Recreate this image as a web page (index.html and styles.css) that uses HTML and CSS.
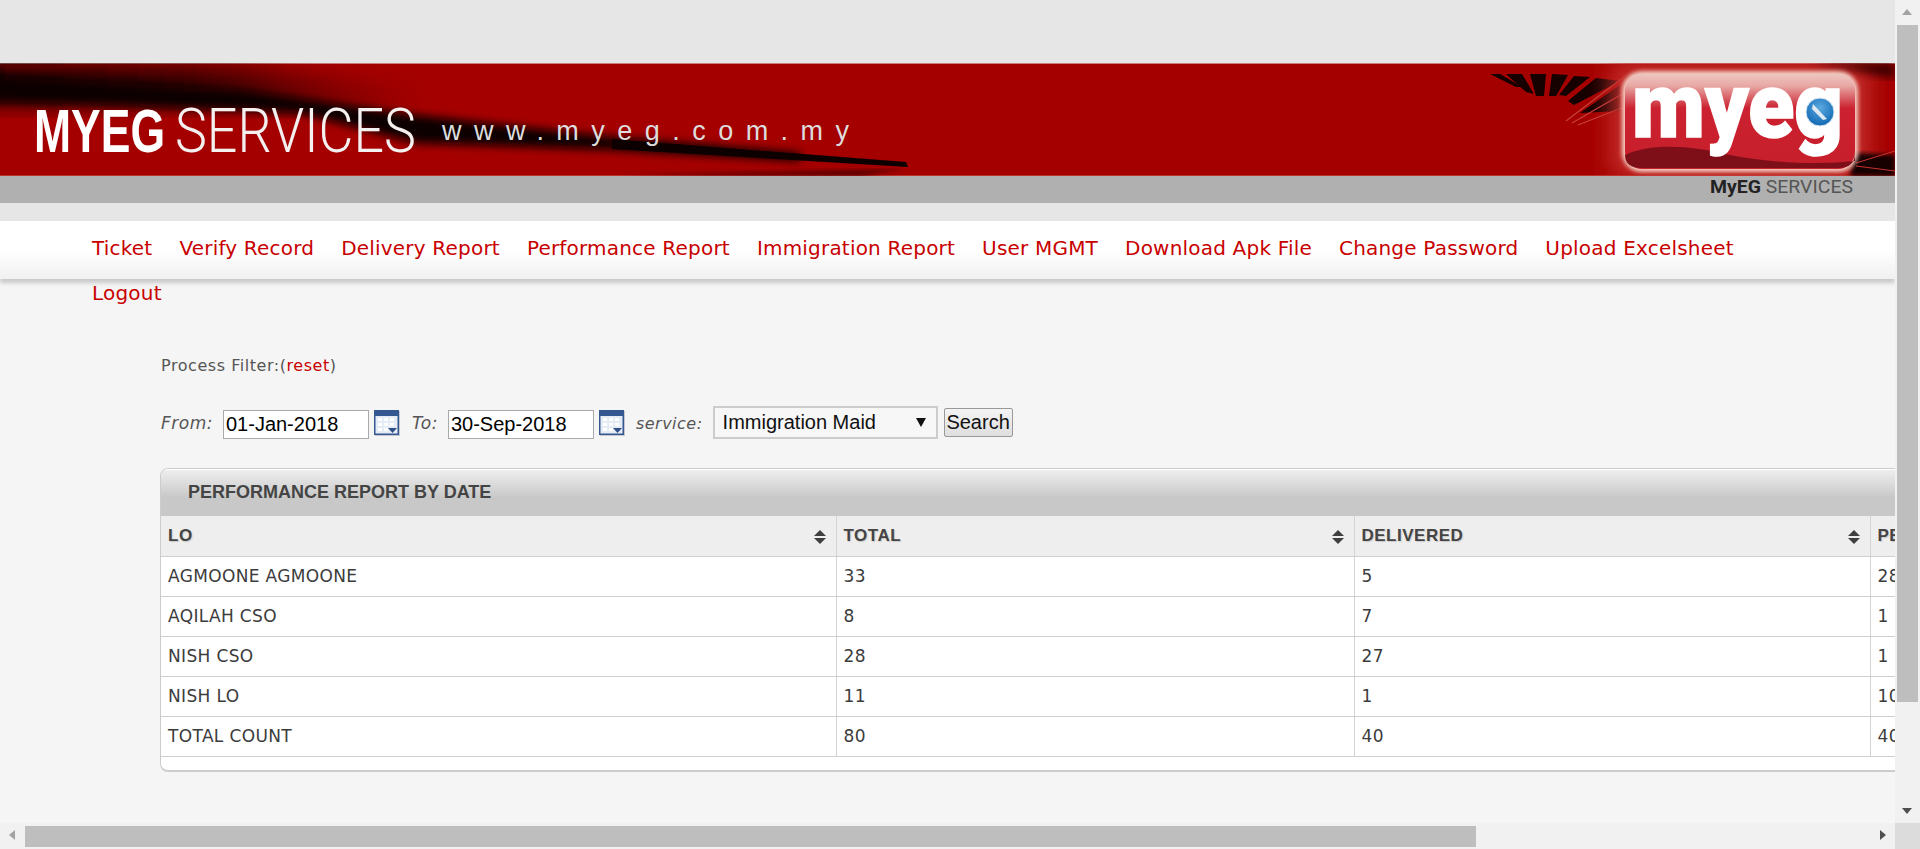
FILE: index.html
```html
<!DOCTYPE html>
<html lang="en">
<head>
    <meta charset="UTF-8">
    <meta name="viewport" content="width=device-width, initial-scale=1.0">
    <title>Performance Report</title>
    <link rel="stylesheet" href="styles.css">
</head>
<body>
<div class="window">
    <div class="page">
        <div class="head">
            <svg class="banner" viewBox="0 0 1895 140" width="1895" height="140">
                <defs>
                    <linearGradient id="badge" x1="0" x2="0" y1="0" y2="1">
                        <stop offset="0" stop-color="#eec5bf"/>
                        <stop offset="0.12" stop-color="#e8aaa6"/>
                        <stop offset="0.36" stop-color="#cb2130"/>
                        <stop offset="1" stop-color="#c81f2c"/>
                    </linearGradient>
                    <linearGradient id="fadeband" x1="0" x2="1" y1="0" y2="0">
                        <stop offset="0" stop-color="#000"/>
                        <stop offset="0.5" stop-color="#2a0000"/>
                        <stop offset="1" stop-color="#a40000"/>
                    </linearGradient>
                    <radialGradient id="globe" cx="0.5" cy="0.35" r="0.7">
                        <stop offset="0" stop-color="#5aa9e0"/>
                        <stop offset="1" stop-color="#0b62ae"/>
                    </radialGradient>
                    <filter id="blur12"><feGaussianBlur stdDeviation="12"/></filter>
                    <filter id="blur5"><feGaussianBlur stdDeviation="5"/></filter>
                    <filter id="blur4"><feGaussianBlur stdDeviation="4"/></filter>
                    <filter id="blur2"><feGaussianBlur stdDeviation="2"/></filter>
                    <filter id="blur1"><feGaussianBlur stdDeviation="0.7"/></filter>
                    <clipPath id="redclip"><rect width="1895" height="113"/></clipPath>
                </defs>

                <rect width="1895" height="140" fill="#b0b0b0"/>
                <rect width="1895" height="113" fill="#a40000"/>
                <rect width="1895" height="1" fill="#c9807d"/>
                <rect y="112" width="1895" height="1" fill="#b9322e"/>

                <g clip-path="url(#redclip)">
                    <!-- black swoosh on the left -->
                    <polygon points="-30,2 240,6 420,30 420,50 240,40 -30,38" fill="url(#fadeband)" filter="url(#blur12)"/>
                    <polygon points="-30,12 245,27 416,52 612,74 800,90 800,98 612,87 416,80 300,50 120,42 -30,38" fill="#080000" filter="url(#blur4)"/>
                    <polygon points="612,76 906,99 908,104 612,86" fill="#0a0000" filter="url(#blur1)"/>
                    <polygon points="620,112 905,106 860,113" fill="#5a0000" filter="url(#blur2)"/>

                    <!-- burst beside the badge -->
                    <g fill="#120000" filter="url(#blur1)">
                        <polygon points="1490,11 1500,11 1522,24 1516,24"/>
                        <polygon points="1506,11 1522,11 1534,31 1526,29"/>
                        <polygon points="1530,11 1546,11 1544,33 1536,33"/>
                        <polygon points="1552,11 1568,12 1556,33 1549,33"/>
                        <polygon points="1574,13 1590,14 1566,33 1559,32"/>
                        <polygon points="1596,15 1620,18 1574,42 1568,38"/>
                        <polygon points="1620,22 1620,48 1580,50"/>
                    </g>
                    <g stroke="#c8413c" stroke-width="1.2">
                        <line x1="1566" y1="58" x2="1624" y2="14"/>
                        <line x1="1572" y1="60" x2="1624" y2="30"/>
                        <line x1="1578" y1="62" x2="1624" y2="44"/>
                    </g>

                    <!-- glow, dark corner and streaks on the right -->
                    <rect x="1612" y="0" width="256" height="113" fill="#c8332f" filter="url(#blur12)"/>
                    <polygon points="1810,0 1895,0 1895,16 1850,6" fill="#3a0000" filter="url(#blur5)"/>
                    <polygon points="1855,90 1895,92 1895,113 1850,113" fill="#140000" filter="url(#blur2)"/>
                    <line x1="1856" y1="100" x2="1895" y2="88" stroke="#c8332f"/>
                    <line x1="1856" y1="103" x2="1895" y2="108" stroke="#c8332f"/>

                    <!-- badge -->
                    <rect x="1622" y="8" width="236" height="101" rx="20" fill="#f4d0c4" filter="url(#blur2)"/>
                    <rect x="1625" y="11" width="230" height="95" rx="17" fill="url(#badge)"/>
                    <path d="M1625 92 C1650 80 1690 82 1730 92 C1770 100 1820 102 1855 98 L1855 90 Q1855 105 1838 105 L1642 105 Q1625 105 1625 92 Z" fill="#7e0f18"/>
                    <text class="logo-word" x="1632" y="74" textLength="211" lengthAdjust="spacingAndGlyphs">myeg</text>
                    <circle cx="1820" cy="49" r="14" fill="url(#globe)" stroke="#dcebf5" stroke-width="1"/>
                    <polygon points="1813,41 1827,56 1823,57 1812,46" fill="#dfeaf3"/>
                </g>

                <text class="brand-bold" x="34" y="89" textLength="131" lengthAdjust="spacingAndGlyphs">MYEG</text>
                <text class="brand-light" x="175" y="89" textLength="241" lengthAdjust="spacingAndGlyphs">SERVICES</text>
                <text class="brand-url" x="442" y="77" textLength="407">www.myeg.com.my</text>
                <text class="logo-sub" x="1710" y="130" textLength="143" lengthAdjust="spacingAndGlyphs"><tspan class="logo-sub-b">MyEG</tspan> SERVICES</text>
            </svg>
        </div>

        <nav class="menu">
            <a href="#">Ticket</a>
            <a href="#">Verify Record</a>
            <a href="#">Delivery Report</a>
            <a href="#">Performance Report</a>
            <a href="#">Immigration Report</a>
            <a href="#">User MGMT</a>
            <a href="#">Download Apk File</a>
            <a href="#">Change Password</a>
            <a href="#">Upload Excelsheet</a>
            <a href="#">Logout</a>
        </nav>

        <div class="content">
            <p class="filter-title">Process Filter:(<a href="#">reset</a>)</p>

            <form class="filter">
                <label for="from">From:</label>
                <input type="text" id="from" value="01-Jan-2018">
                <svg class="cal" viewBox="0 0 26 26" width="26" height="26"><use href="#cal"/></svg>
                <label for="to" class="to">To:</label>
                <input type="text" id="to" value="30-Sep-2018">
                <svg class="cal" viewBox="0 0 26 26" width="26" height="26"><use href="#cal"/></svg>
                <label for="service" class="service">service:</label>
                <div class="fake-select" id="service">Immigration Maid<span class="caret"></span></div>
                <button type="button">Search</button>
            </form>

            <div class="box">
                <h2>Performance Report by Date</h2>
                <table>
                    <thead>
                        <tr>
                            <th class="c1">LO<span class="sort"></span></th>
                            <th class="c2">TOTAL<span class="sort"></span></th>
                            <th class="c3">DELIVERED<span class="sort"></span></th>
                            <th>PENDING<span class="sort"></span></th>
                        </tr>
                    </thead>
                    <tbody>
                        <tr><td>AGMOONE AGMOONE</td><td>33</td><td>5</td><td>28</td></tr>
                        <tr><td>AQILAH CSO</td><td>8</td><td>7</td><td>1</td></tr>
                        <tr><td>NISH CSO</td><td>28</td><td>27</td><td>1</td></tr>
                        <tr><td>NISH LO</td><td>11</td><td>1</td><td>10</td></tr>
                        <tr><td>TOTAL COUNT</td><td>80</td><td>40</td><td>40</td></tr>
                    </tbody>
                </table>
            </div>
        </div>
    </div>

    <div class="vbar">
        <span class="arrow up"></span>
        <div class="vthumb"></div>
        <span class="arrow down"></span>
    </div>
    <div class="hbar">
        <span class="arrow left"></span>
        <div class="hthumb"></div>
        <span class="arrow right"></span>
    </div>
    <div class="corner"></div>
</div>

<svg class="defs" width="0" height="0">
    <symbol id="cal" viewBox="0 0 26 26">
        <rect x="0" y="0" width="25" height="25" fill="#34588f"/>
        <rect x="1.5" y="6" width="22" height="17.5" fill="#e6ecf6"/>
        <g fill="#fff">
            <rect x="4" y="8" width="4" height="3"/><rect x="10" y="8" width="4" height="3"/><rect x="16" y="8" width="4" height="3"/>
            <rect x="4" y="13" width="4" height="3"/><rect x="10" y="13" width="4" height="3"/><rect x="16" y="13" width="4" height="3"/>
            <rect x="4" y="18" width="4" height="3"/><rect x="10" y="18" width="4" height="3"/>
        </g>
        <polygon points="14,18 23,18 18.5,23" fill="#2f4f86"/>
        <rect x="25" y="1" width="1" height="25" fill="#c4c8d0"/>
        <rect x="1" y="25" width="25" height="1" fill="#c4c8d0"/>
    </symbol>
</svg>
</body>
</html>
```

FILE: styles.css
```css
body
{
    margin: 0;
    padding: 0;
    height: 849px;
    overflow: hidden;
    background: #f5f5f5;
    font-family: "DejaVu Sans", Verdana, sans-serif;
    color: #444;
}

.window
{
    display: grid;
    grid-template-columns: 1895px 25px;
    grid-template-rows: 823px 26px;
    height: 849px;
}

.page
{
    overflow: hidden;
    background: #f5f5f5;
}

.defs
{
    position: absolute;
}

/* banner */
.head
{
    background: #e6e6e6;
    padding-top: 63px;
    padding-bottom: 18px;
}

.banner
{
    display: block;
}

.brand-bold
{
    font-family: "Liberation Sans Narrow", "Liberation Sans", Arial, sans-serif;
    font-weight: bold;
    font-size: 61px;
    fill: #fff;
}

.brand-light
{
    font-family: Roboto, sans-serif;
    font-weight: 300;
    font-size: 62px;
    fill: #f4f0f0;
}

.brand-url
{
    font-family: "Liberation Sans", Arial, sans-serif;
    font-size: 27px;
    fill: #ddd;
}

.logo-word
{
    font-family: Roboto, sans-serif;
    font-weight: 900;
    font-size: 90px;
    fill: #fff;
    stroke: #fff;
    stroke-width: 1.5px;
}

.logo-sub
{
    font-family: Roboto, sans-serif;
    font-size: 19px;
    fill: #555;
}

.logo-sub-b
{
    font-weight: bold;
    fill: #222;
}

/* menu */
.menu
{
    height: 58px;
    box-sizing: border-box;
    padding-top: 5px;
    padding-left: 92px;
    padding-right: 100px;
    display: flex;
    flex-wrap: wrap;
    column-gap: 27px;
    align-content: flex-start;
    background: linear-gradient(#fff 50%, #f0f0f0);
    box-shadow: 0 4px 4px rgba(0, 0, 0, 0.18);
}

.menu a
{
    color: #c80000;
    text-decoration: none;
    font-size: 20px;
    letter-spacing: 0.2px;
    line-height: 45px;
    white-space: nowrap;
}

/* filter */
.content
{
    padding-left: 161px;
    padding-top: 77px;
}

.filter-title
{
    margin: 0;
    font-size: 16px;
    letter-spacing: 0.55px;
    line-height: 20px;
    color: #555;
}

.filter-title a
{
    color: #c80000;
    text-decoration: none;
}

.filter
{
    display: flex;
    align-items: flex-start;
    margin-top: 34px;
    height: 58px;
}

.filter label
{
    font-style: italic;
    font-size: 17px;
    line-height: 27px;
    color: #555;
    letter-spacing: 0.5px;
}

.filter input
{
    width: 146px;
    height: 29px;
    box-sizing: border-box;
    border: 1px solid #a9a9a9;
    padding: 0 2px;
    margin-left: 10px;
    font-family: "Liberation Sans", Arial, sans-serif;
    font-size: 20px;
    background: #fff;
    color: #000;
}

.cal
{
    margin-left: 5px;
}

.filter .to
{
    margin-left: 12px;
}

.filter .service
{
    margin-left: 11px;
    font-size: 16px;
}

.fake-select
{
    width: 225px;
    height: 33px;
    margin-left: 10px;
    margin-top: -4px;
    box-sizing: border-box;
    border: 2px solid #ccc;
    padding-left: 8px;
    display: flex;
    align-items: center;
    justify-content: space-between;
    background: #f7f7f7;
    font-family: "Liberation Sans", Arial, sans-serif;
    font-size: 20px;
    color: #111;
}

.caret
{
    width: 0;
    height: 0;
    margin-right: 10px;
    border-left: 5px solid transparent;
    border-right: 5px solid transparent;
    border-top: 9px solid #111;
}

.filter button
{
    width: 69px;
    height: 29px;
    margin-left: 6px;
    margin-top: -2px;
    padding: 0;
    border: 1px solid #999;
    border-radius: 2px;
    background: linear-gradient(#f4f4f4, #dedede);
    font-family: "Liberation Sans", Arial, sans-serif;
    font-size: 20px;
    color: #111;
}

/* report box */
.box
{
    width: 2000px;
    margin-left: -1px;
    background: #fff;
    border: 1px solid #ccc;
    border-bottom-width: 2px;
    border-radius: 8px;
    overflow: hidden;
    padding-bottom: 13px;
}

.box h2
{
    margin: 0;
    height: 47px;
    padding-left: 27px;
    border-top: 1px solid #fff;
    box-sizing: border-box;
    background: linear-gradient(#eeeeee, #c8c8c8 60%);
    font-family: "Liberation Sans", Arial, sans-serif;
    font-size: 18px;
    line-height: 45px;
    text-transform: uppercase;
    color: #444;
}

table
{
    width: 100%;
    border-collapse: collapse;
    table-layout: fixed;
}

th, td
{
    height: 40px;
    padding: 0 0 0 7px;
    box-sizing: border-box;
    border-right: 1px solid #d4d4d4;
    border-bottom: 1px solid #d0d0d0;
    text-align: left;
}

th:last-child, td:last-child
{
    border-right: none;
}

th
{
    position: relative;
    background: #eee;
    font-family: "Liberation Sans", Arial, sans-serif;
    font-size: 17px;
    letter-spacing: 0.5px;
    color: #444;
    text-shadow: 1px 1px 1px #ccc;
}

td
{
    font-size: 17px;
    letter-spacing: 0.35px;
    color: #3c3c3c;
}

.c1
{
    width: 675px;
}

.c2
{
    width: 518px;
}

.c3
{
    width: 516px;
}

/* stacked arrows at the right of a header cell */
.sort
{
    position: absolute;
    top: 14px;
    right: 10px;
    width: 0;
    height: 0;
    border-left: 6px solid transparent;
    border-right: 6px solid transparent;
    border-bottom: 6px solid #3f3f3f;
}

.sort::after
{
    content: "";
    position: absolute;
    top: 8px;
    left: -6px;
    width: 0;
    height: 0;
    border-left: 6px solid transparent;
    border-right: 6px solid transparent;
    border-top: 6px solid #3f3f3f;
}

/* scrollbars */
.vbar
{
    background: #f1f1f1;
    display: flex;
    flex-direction: column;
    align-items: center;
    position: relative;
}

.vthumb
{
    position: absolute;
    top: 25px;
    left: 2px;
    width: 21px;
    height: 677px;
    background: #bebebe;
}

.hbar
{
    background: #f1f1f1;
    position: relative;
}

.hthumb
{
    position: absolute;
    top: 3px;
    left: 25px;
    width: 1451px;
    height: 21px;
    background: #bebebe;
}

.corner
{
    background: #dcdcdc;
}

.arrow
{
    position: absolute;
    width: 0;
    height: 0;
}

.up
{
    top: 9px;
    left: 7px;
    border-left: 5.5px solid transparent;
    border-right: 5.5px solid transparent;
    border-bottom: 6px solid #a3a3a3;
}

.down
{
    left: 7px;
    top: 808px;
    border-left: 5.5px solid transparent;
    border-right: 5.5px solid transparent;
    border-top: 6px solid #505050;
}

.left
{
    top: 7px;
    left: 9px;
    border-top: 5.5px solid transparent;
    border-bottom: 5.5px solid transparent;
    border-right: 6px solid #a3a3a3;
}

.right
{
    top: 7px;
    right: 9px;
    border-top: 5.5px solid transparent;
    border-bottom: 5.5px solid transparent;
    border-left: 6px solid #505050;
}
```
